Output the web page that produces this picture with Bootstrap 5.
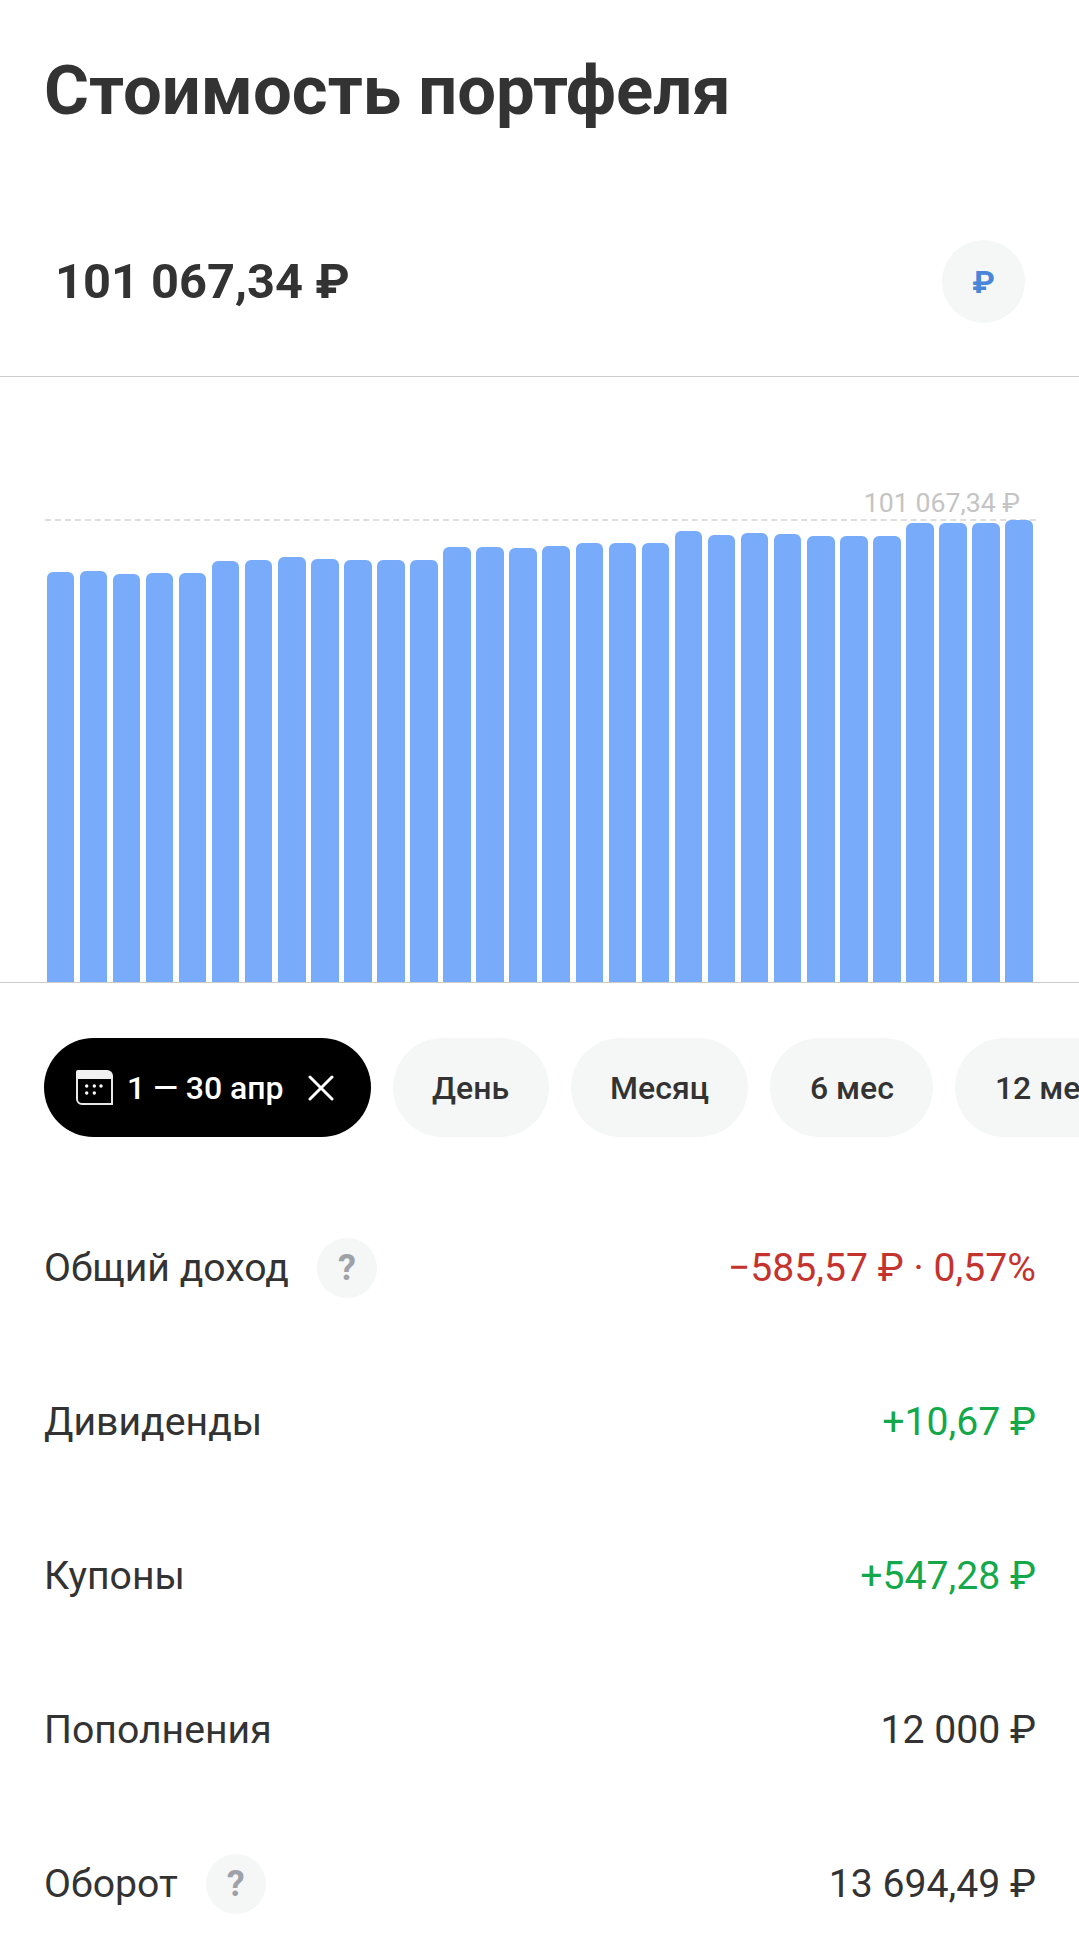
<!DOCTYPE html>
<html lang="ru">
<head>
  <meta charset="UTF-8">
  <meta name="viewport" content="width=device-width, initial-scale=1.0">
  <title>Стоимость портфеля</title>
  <link href="https://cdn.jsdelivr.net/npm/bootstrap@5.3.0/dist/css/bootstrap.min.css" rel="stylesheet">
  <style>
    html, body {
      height: 1954px;
      overflow: hidden;
    }
    body {
      background-color: #fff;
      color: #333;
      font-family: Roboto, "Liberation Sans", sans-serif;
    }
    .page-title {
      font-size: 68.8px;
      font-weight: 700;
      line-height: 80px;
      margin: 0;
      padding: 51px 0 0 44px;
      height: 200px;
      color: #333;
    }
    .total-box {
      height: 177px;
      padding: 0 54px 13px 55px;
      border-bottom: 1px solid #ccc;
    }
    .total-sum {
      font-size: 48.8px;
      font-weight: 700;
    }
    .cur-btn {
      width: 83px;
      height: 83px;
      background: #f5f7f7;
      color: #4a86d8;
      font-size: 32px;
      font-weight: 700;
    }
    .chart-box {
      height: 606px;
      padding: 110px 46px 0 46.5px;
      border-bottom: 1px solid #ccc;
    }
    .max-label {
      font-size: 26.7px;
      line-height: 32px;
      color: #c4c4c4;
      padding-right: 13px;
    }
    .max-line {
      border-top: 2px dashed #dedede;
      margin: 0 -3px -2px -2px;
      height: 0;
    }
    .bars {
      height: 463px;
      gap: 5.5px;
    }
    .bar-item {
      flex: 1 1 0;
      background: #78abfa;
      border-radius: 6px 6px 0 0;
    }
    .pills-row {
      padding: 55px 0 0 44px;
      gap: 22px;
      height: 208px;
      white-space: nowrap;
    }
    .pill-item {
      height: 99px;
      padding: 0 39.5px;
      background: #f5f7f7;
      color: #333;
      font-size: 32px;
      font-weight: 500;
      flex: 0 0 auto;
      border-radius: 50px;
    }
    .pill-active {
      background: #000;
      color: #fff;
      padding: 0 37px 0 32px;
      gap: 14px;
    }
    .close-mark {
      margin-left: 10px;
    }
    .stat-row {
      height: 154px;
      padding: 0 43px 0 44px;
      font-size: 39.2px;
    }
    .hint-mark {
      width: 60px;
      height: 60px;
      background: #f5f7f7;
      color: #9ea2a8;
      font-size: 36px;
      font-weight: 700;
      margin-left: 28px;
    }
    .val-red { color: #c5332f; }
    .val-green { color: #14a84a; }
  </style>
</head>
<body>

<h1 class="page-title">Стоимость портфеля</h1>

<div class="total-box d-flex align-items-center justify-content-between">
  <div class="total-sum">101 067,34 ₽</div>
  <div class="cur-btn rounded-circle d-flex align-items-center justify-content-center">₽</div>
</div>

<div class="chart-box">
  <div class="max-label text-end">101 067,34 ₽</div>
  <div class="max-line"></div>
  <div id="bars" class="bars d-flex align-items-end"></div>
</div>

<div class="pills-row d-flex">
  <div class="pill-item pill-active d-flex align-items-center">
    <svg width="37" height="35" viewBox="0 0 37 35" fill="none">
      <defs>
        <linearGradient id="calTop" x1="0" y1="0" x2="37" y2="0">
          <stop offset="0" stop-color="#f2f2f2"/>
          <stop offset="1" stop-color="#9a9a9a"/>
        </linearGradient>
      </defs>
      <path d="M2 0h29a6 6 0 0 1 6 6v3H0V2a2 2 0 0 1 2-2z" fill="url(#calTop)"/>
      <path d="M1 8v21a5 5 0 0 0 5 5h30V8" stroke="#e8e8e8" stroke-width="2"/>
      <g fill="#fff">
        <circle cx="10.7" cy="16" r="1.7"/><circle cx="18.3" cy="16" r="1.7"/><circle cx="25" cy="16" r="1.7"/>
        <circle cx="10.7" cy="23" r="1.7"/><circle cx="18.3" cy="23" r="1.7"/>
      </g>
    </svg>
    <span>1 — 30 апр</span>
    <svg class="close-mark" width="26" height="26" viewBox="0 0 26 26" fill="none" stroke="#fff" stroke-width="3" stroke-linecap="round">
      <path d="M2 2l22 22M24 2L2 24"/>
    </svg>
  </div>
  <div class="pill-item d-flex align-items-center">День</div>
  <div class="pill-item d-flex align-items-center">Месяц</div>
  <div class="pill-item d-flex align-items-center">6 мес</div>
  <div class="pill-item d-flex align-items-center">12 мес</div>
</div>

<div class="stat-row d-flex align-items-center justify-content-between">
  <div class="d-flex align-items-center">Общий доход <span class="hint-mark rounded-circle d-flex align-items-center justify-content-center">?</span></div>
  <div class="val-red">−585,57 ₽ · 0,57%</div>
</div>
<div class="stat-row d-flex align-items-center justify-content-between">
  <div>Дивиденды</div>
  <div class="val-green">+10,67 ₽</div>
</div>
<div class="stat-row d-flex align-items-center justify-content-between">
  <div>Купоны</div>
  <div class="val-green">+547,28 ₽</div>
</div>
<div class="stat-row d-flex align-items-center justify-content-between">
  <div>Пополнения</div>
  <div>12 000 ₽</div>
</div>
<div class="stat-row d-flex align-items-center justify-content-between">
  <div class="d-flex align-items-center">Оборот <span class="hint-mark rounded-circle d-flex align-items-center justify-content-center">?</span></div>
  <div>13 694,49 ₽</div>
</div>

<script>
// высоты столбцов в пикселях
const barHeights = [410, 411, 408, 409, 409, 421, 422, 425, 423, 422, 422, 422, 435, 435, 434, 436, 439, 439, 439, 451, 447, 449, 448, 446, 446, 446, 459, 459, 459, 462];
const barsEl = document.getElementById('bars');
barHeights.forEach(h => {
  const bar = document.createElement('div');
  bar.className = 'bar-item';
  bar.style.height = `${h}px`;
  barsEl.appendChild(bar);
});
</script>
</body>
</html>
